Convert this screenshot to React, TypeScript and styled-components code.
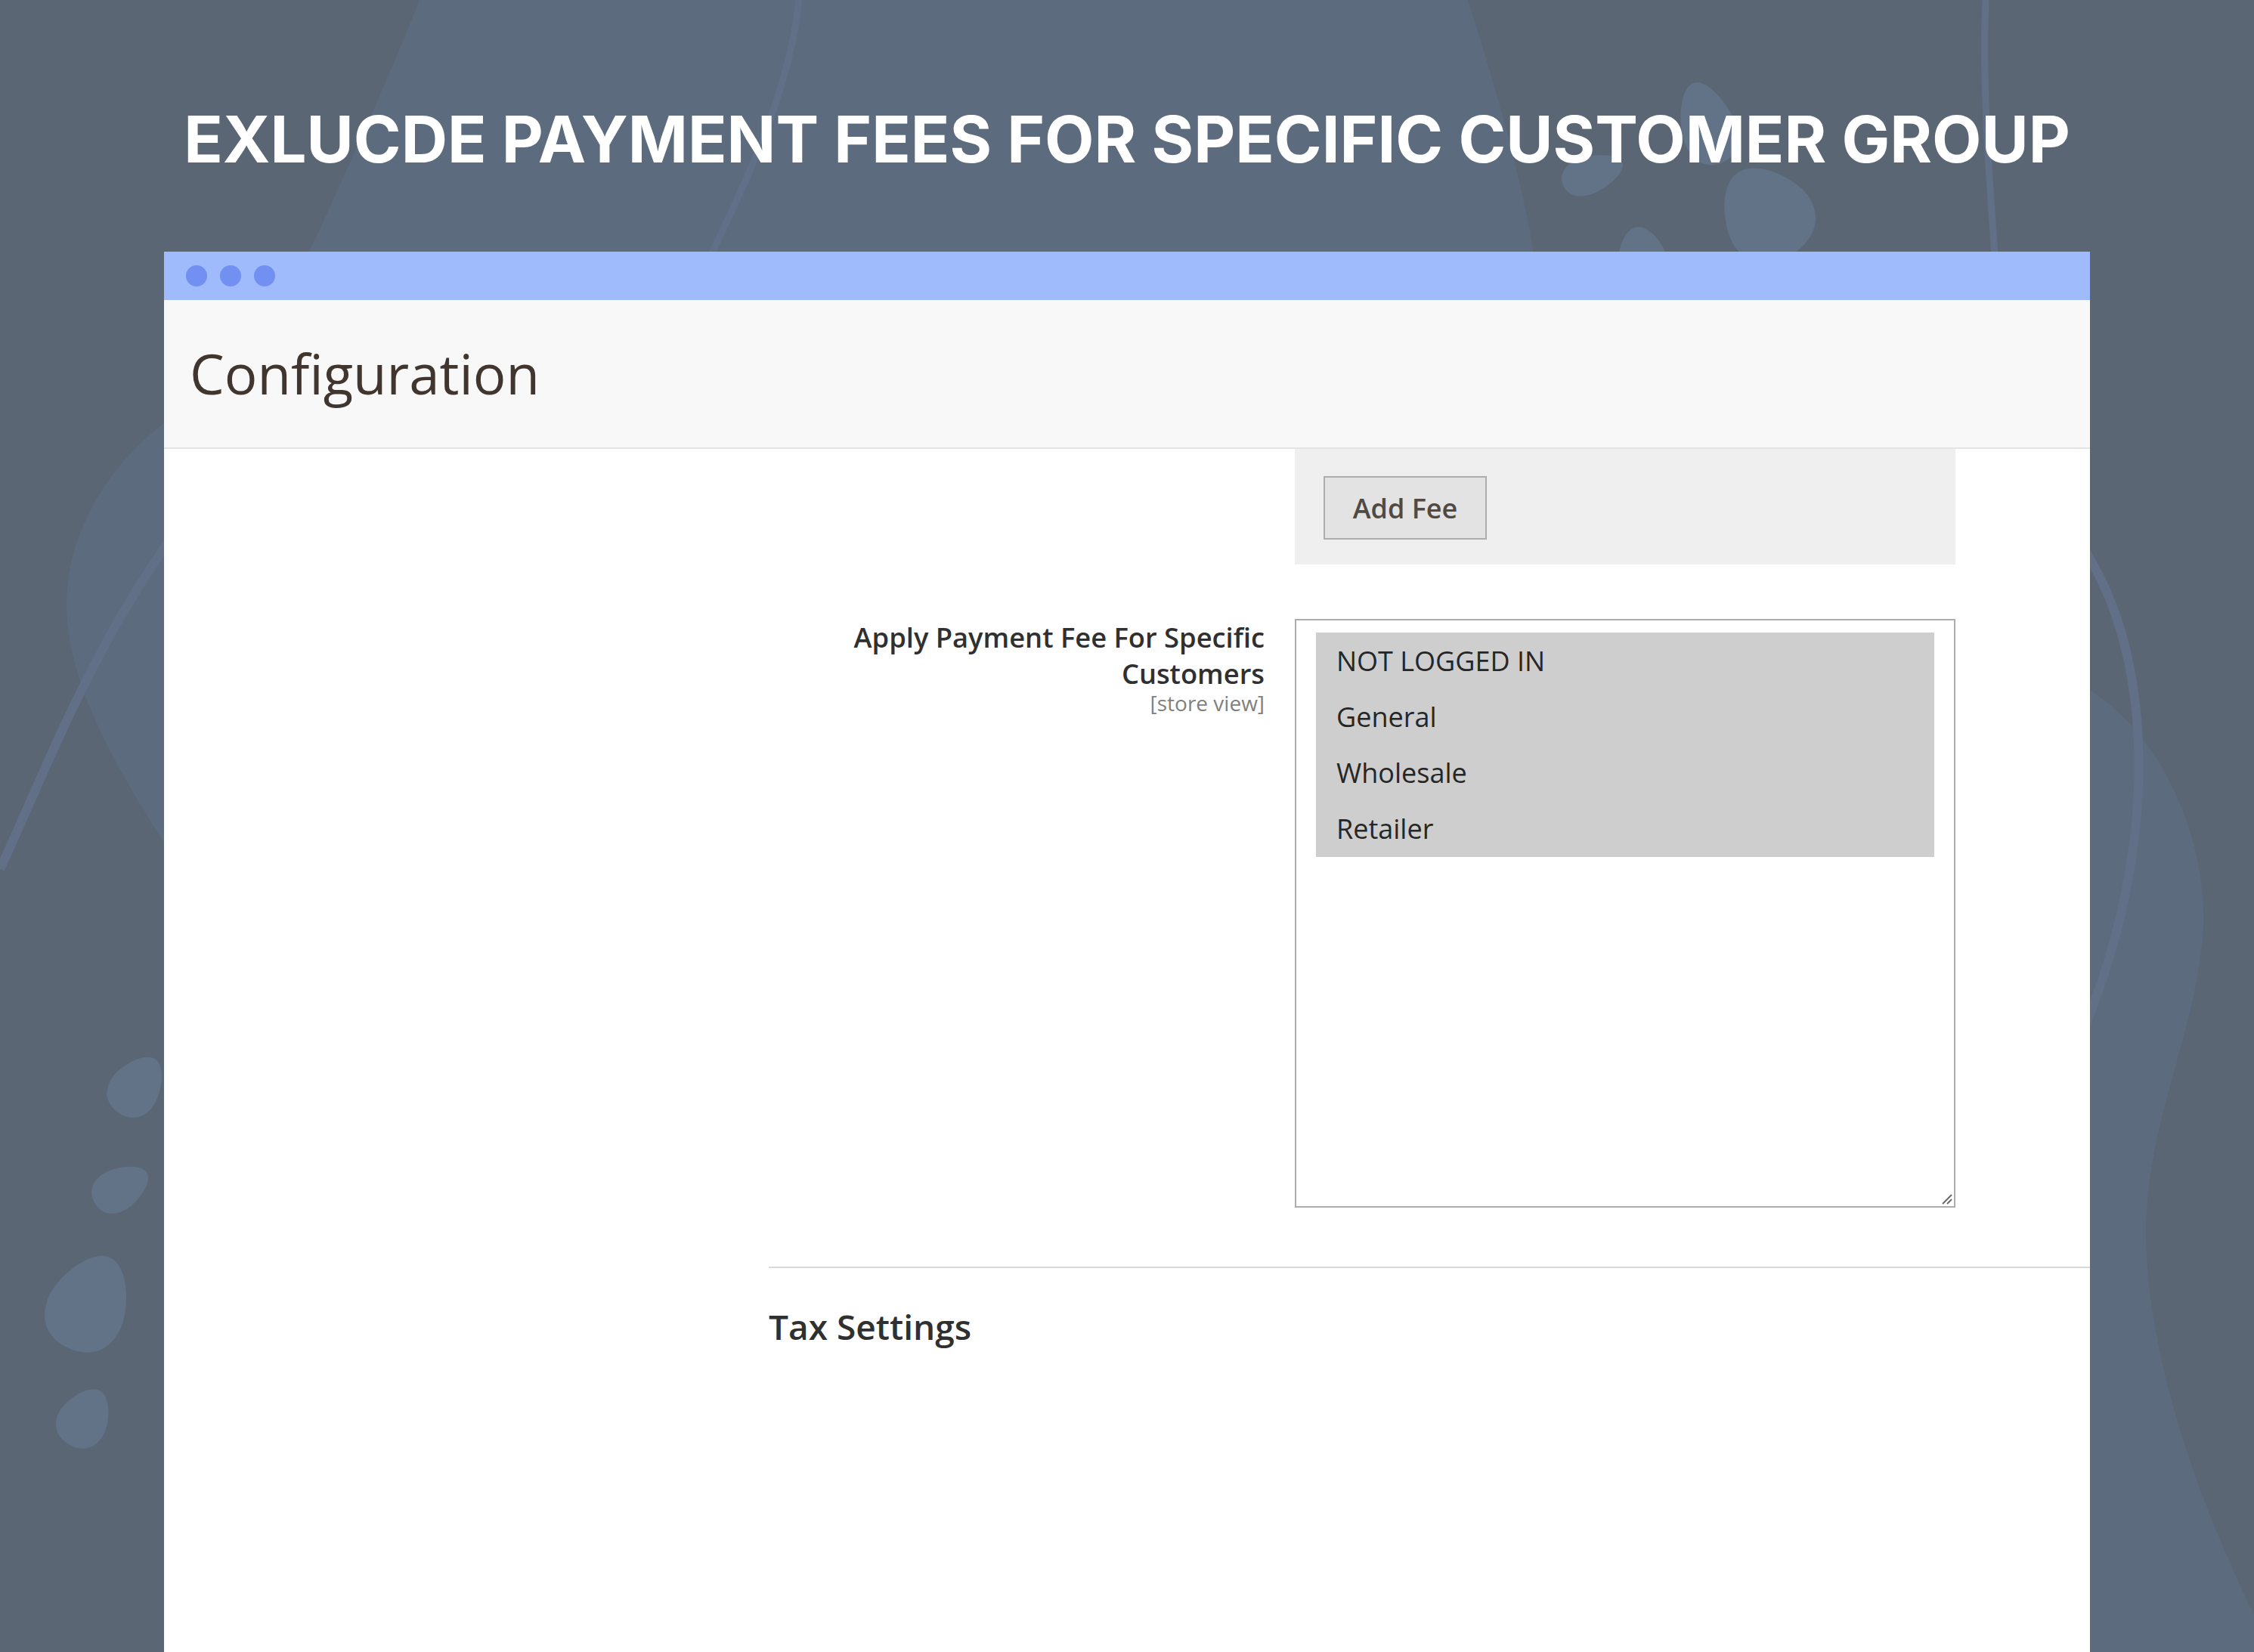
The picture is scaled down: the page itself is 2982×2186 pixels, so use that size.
import React from "react";
import styled, { createGlobalStyle } from "styled-components";

const GlobalStyle = createGlobalStyle`
  html, body { margin: 0; padding: 0; }
  body { background: #5a6674; }
  * { box-sizing: border-box; }
`;

const Page = styled.div`
  position: relative;
  width: 2982px;
  height: 2186px;
  overflow: hidden;
  background: #5a6674;
  padding-top: 142px;
  display: flex;
  flex-direction: column;
`;

const Backdrop = styled.svg`
  position: absolute;
  left: 0;
  top: 0;
  width: 2982px;
  height: 2186px;
  z-index: 0;
`;

const Heading = styled.h1`
  position: relative;
  z-index: 1;
  margin: 0;
  text-align: center;
  color: #ffffff;
  font-family: Inter, "Liberation Sans", sans-serif;
  font-weight: 700;
  font-size: 85px;
  line-height: 85px;
`;

const Window = styled.div`
  position: relative;
  z-index: 1;
  margin: 106px 0 0 217px;
  width: 2548px;
  flex: 1;
  display: flex;
  flex-direction: column;
  background: #ffffff;
  font-family: "Open Sans", "Liberation Sans", sans-serif;
`;

const TitleBar = styled.div`
  height: 64px;
  background: #a0bbfc;
  display: flex;
  align-items: center;
  gap: 17px;
  padding-left: 29px;
`;

const Dot = styled.span`
  width: 28px;
  height: 28px;
  border-radius: 50%;
  background: #7290f1;
`;

const Header = styled.div`
  height: 197px;
  background: #f8f8f8;
  border-bottom: 2px solid #e4e4e4;
  padding: 55px 0 0 34px;
`;

const PageTitle = styled.h2`
  margin: 0;
  font-weight: 400;
  font-size: 72.6px;
  line-height: 84px;
  color: #41362f;
`;

const Body = styled.div`
  flex: 1;
  padding-left: 800px;
  display: flex;
  flex-direction: column;
`;

const FieldRow = styled.div<{ $gap?: number }>`
  display: grid;
  grid-template-columns: 656px 874px;
  column-gap: 40px;
  margin-top: ${(p) => p.$gap ?? 0}px;
`;

const ActionPanel = styled.div`
  grid-column: 2;
  height: 153px;
  background: #efefef;
  padding: 36px 0 0 38px;
`;

const Button = styled.button`
  width: 216px;
  height: 84px;
  background: #e3e3e3;
  border: 2px solid #adadad;
  border-radius: 0;
  font-family: "Open Sans", "Liberation Sans", sans-serif;
  font-weight: 600;
  font-size: 36px;
  color: #514943;
  padding: 0;
  cursor: pointer;
`;

const Label = styled.div`
  text-align: right;
  color: #303030;
`;

const LabelText = styled.div`
  font-weight: 600;
  font-size: 36.3px;
  line-height: 48px;
`;

const Scope = styled.div`
  font-size: 28px;
  line-height: 30px;
  color: #808080;
`;

const MultiSelect = styled.div`
  position: relative;
  height: 779px;
  border: 2px solid #adadad;
  padding: 16px 26px;
  background: #fff;
`;

const OptionList = styled.div`
  background: #cecece;
  display: flex;
  flex-direction: column;
`;

const Option = styled.div`
  height: 74.25px;
  display: flex;
  align-items: center;
  padding-left: 27px;
  font-size: 36px;
  color: #262626;
`;

const Grip = styled.svg`
  position: absolute;
  right: 2px;
  bottom: 2px;
  width: 16px;
  height: 16px;
`;

const Divider = styled.hr`
  margin: 78px 0 0 0;
  border: none;
  height: 2px;
  background: #d9d9d9;
`;

const SectionTitle = styled.h3`
  margin: 47px 0 0 0;
  font-weight: 600;
  font-size: 46px;
  line-height: 60px;
  color: #303030;
`;

const groups = ["NOT LOGGED IN", "General", "Wholesale", "Retailer"];

function drop(cx: number, cy: number, w: number, h: number, rot: number) {
  const a = w / 2;
  const b = h / 2;
  const d = `M0,${-b} C${a * 0.55},${-b} ${a},${-b * 0.2} ${a},${b * 0.2} C${a},${b * 0.75} ${a * 0.55},${b} 0,${b} C${-a * 0.55},${b} ${-a},${b * 0.75} ${-a},${b * 0.2} C${-a},${-b * 0.2} ${-a * 0.55},${-b} 0,${-b} Z`;
  return { d, transform: `translate(${cx} ${cy}) rotate(${rot})` };
}

const blobs = [
  drop(2258, 163, 72, 112, -18),
  drop(2107, 230, 50, 84, 70),
  drop(2336, 282, 118, 130, -35),
  drop(2172, 340, 66, 80, -10),
  drop(181, 1437, 66, 86, 35),
  drop(160, 1572, 56, 80, 60),
  drop(118, 1724, 104, 132, 25),
  drop(112, 1876, 66, 82, 30),
];

function Background() {
  const light = "#5d6b7e";
  const blob = "#627287";
  const line = "#617086";
  return (
    <Backdrop viewBox="0 0 2982 2186" aria-hidden="true">
      <path
        fill={light}
        d="M555,0 L1942,0 C1990,150 2015,250 2030,340 L2030,1300 L217,1300 L217,1115 C150,1010 88,900 88,800 C88,700 150,610 217,560 C300,480 380,390 420,310 C470,200 520,90 555,0 Z"
      />
      <path
        fill={light}
        d="M2740,900 C2850,950 2920,1100 2915,1227 C2905,1380 2830,1500 2840,1662 C2850,1850 2940,2050 2982,2137 L2982,2186 L2740,2186 Z"
      />
      <path d="M1057,0 C1045,120 990,240 900,420" stroke={line} strokeWidth="9" fill="none" />
      <path d="M2627,0 C2622,120 2632,240 2645,420" stroke={line} strokeWidth="9" fill="none" />
      <path d="M0,1150 C70,1000 140,800 300,620" stroke={line} strokeWidth="12" fill="none" />
      <path d="M2700,660 C2860,800 2870,1120 2740,1400" stroke={line} strokeWidth="12" fill="none" />
      {blobs.map((b, i) => (
        <path key={i} d={b.d} transform={b.transform} fill={blob} />
      ))}
    </Backdrop>
  );
}

export default function App() {
  return (
    <>
      <GlobalStyle />
      <Page>
        <Background />
        <Heading>EXLUCDE PAYMENT FEES FOR SPECIFIC CUSTOMER GROUP</Heading>
        <Window>
          <TitleBar>
            <Dot />
            <Dot />
            <Dot />
          </TitleBar>
          <Header>
            <PageTitle>Configuration</PageTitle>
          </Header>
          <Body>
            <FieldRow>
              <ActionPanel>
                <Button type="button">Add Fee</Button>
              </ActionPanel>
            </FieldRow>
            <FieldRow $gap={72}>
              <Label>
                <LabelText>Apply Payment Fee For Specific Customers</LabelText>
                <Scope>[store view]</Scope>
              </Label>
              <MultiSelect role="listbox" aria-multiselectable="true">
                <OptionList>
                  {groups.map((g) => (
                    <Option key={g} role="option" aria-selected="true">
                      {g}
                    </Option>
                  ))}
                </OptionList>
                <Grip viewBox="0 0 16 16">
                  <path d="M3,15 L15,3 M9,15 L15,9" stroke="#6b6b6b" strokeWidth="2" fill="none" />
                </Grip>
              </MultiSelect>
            </FieldRow>
            <Divider />
            <SectionTitle>Tax Settings</SectionTitle>
          </Body>
        </Window>
      </Page>
    </>
  );
}
